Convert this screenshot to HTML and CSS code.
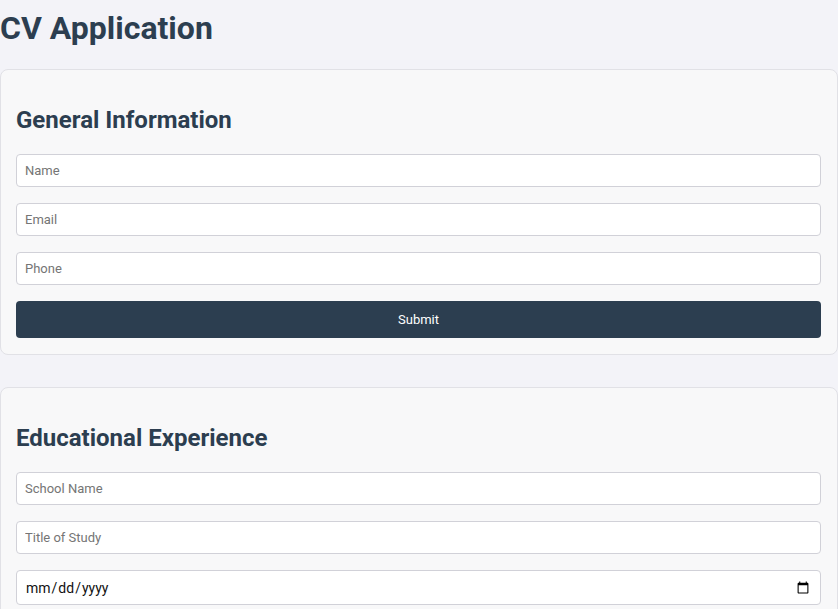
FILE: index.html
```html
<!DOCTYPE html>
<html>
<head>
<meta charset="utf-8">
<link rel="stylesheet" href="styles.css">
</head>
<body>
<div class="app">
  <h1 class="title">CV Application</h1>
  <section class="card">
    <h2 class="card-title">General Information</h2>
    <form class="form">
      <input class="field" type="text" placeholder="Name">
      <input class="field" type="email" placeholder="Email">
      <input class="field" type="tel" placeholder="Phone">
      <button class="btn" type="button">Submit</button>
    </form>
  </section>
  <section class="card">
    <h2 class="card-title">Educational Experience</h2>
    <form class="form">
      <input class="field" type="text" placeholder="School Name">
      <input class="field" type="text" placeholder="Title of Study">
      <input class="field date" type="date">
    </form>
  </section>
</div>
</body>
</html>
```
FILE: styles.css
```css
html, body {
  margin: 0;
  padding: 0;
  background: #f3f3f8;
  font-family: Roboto, "Liberation Sans", sans-serif;
  color: #2c3e50;
}
.app {
  display: flex;
  flex-direction: column;
}
.title {
  margin: 9px 0 22px;
  font-size: 32px;
  font-weight: 700;
  line-height: 38px;
  color: #2c3e50;
}
.card {
  background: #f8f8f9;
  border: 1px solid #e1e1e6;
  border-radius: 8px;
  padding: 16px 16px 16px 15px;
  margin-bottom: 32px;
}
.card-title {
  margin: 20px 0;
  font-size: 24px;
  line-height: 28px;
  font-weight: 700;
  color: #2c3e50;
}
.form {
  display: flex;
  flex-direction: column;
  gap: 16px;
}
.field {
  display: block;
  box-sizing: border-box;
  width: 100%;
  height: 33px;
  padding: 8px;
  border: 1px solid #d1d1d8;
  border-radius: 4px;
  background: #fff;
  font-family: Roboto, "Liberation Sans", sans-serif;
  font-size: 13px;
  color: #111;
  outline: none;
}
.field::placeholder {
  color: #757575;
}
.date {
  height: 35px;
  font-size: 14px;
}
.btn {
  height: 37px;
  border: none;
  border-radius: 4px;
  background: #2c3e50;
  color: #fff;
  font-family: Roboto, "Liberation Sans", sans-serif;
  font-size: 13px;
}
```
